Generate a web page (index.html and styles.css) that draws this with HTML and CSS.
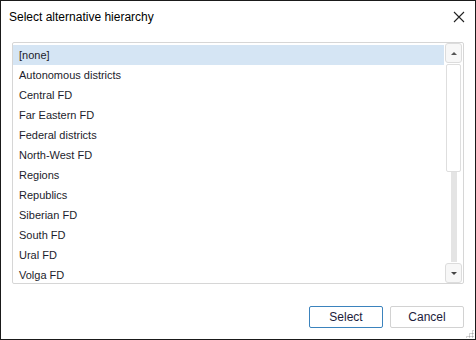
FILE: index.html
```html
<!DOCTYPE html>
<html lang="en">
<head>
    <meta charset="UTF-8">
    <title>Select alternative hierarchy</title>
    <link rel="stylesheet" href="styles.css">
</head>
<body>

    <div class="dialog">
        <div class="title-bar">
            <span class="title">Select alternative hierarchy</span>
            <svg class="close" width="12" height="12" viewBox="0 0 12 12">
                <path d="M1 1 L11 11 M11 1 L1 11" stroke="#222" stroke-width="1.1" fill="none"/>
            </svg>
        </div>

        <div class="list-box">
            <div class="items">
                <div class="item selected">[none]</div>
                <div class="item">Autonomous districts</div>
                <div class="item">Central FD</div>
                <div class="item">Far Eastern FD</div>
                <div class="item">Federal districts</div>
                <div class="item">North-West FD</div>
                <div class="item">Regions</div>
                <div class="item">Republics</div>
                <div class="item">Siberian FD</div>
                <div class="item">South FD</div>
                <div class="item">Ural FD</div>
                <div class="item">Volga FD</div>
            </div>
            <div class="scrollbar">
                <div class="scroll-btn"><span class="arrow up"></span></div>
                <div class="track">
                    <div class="thumb"></div>
                    <div class="rail"></div>
                </div>
                <div class="scroll-btn"><span class="arrow down"></span></div>
            </div>
        </div>

        <div class="buttons">
            <button class="btn primary">Select</button>
            <button class="btn">Cancel</button>
        </div>

        <div class="grip"></div>
    </div>

</body>
</html>
```

FILE: styles.css
```css
body {
    margin: 0;
    padding: 0;
    background: #ffffff;
    font-family: "Liberation Sans", Arial, sans-serif;
    color: #1c1c2c;
}

.dialog {
    width: 476px;
    height: 340px;
    box-sizing: border-box;
    border: 1px solid #1a1a1a;
    background: #ffffff;
    display: flex;
    flex-direction: column;
    position: relative;
}

.title-bar {
    height: 31px;
    display: flex;
    align-items: center;
    justify-content: space-between;
    padding: 0 8px 0 8px;
}

.title {
    font-size: 12px;
    color: #000;
}

.close {
    margin-right: 2px;
}

.list-box {
    margin: 10px 11px 0 11px;
    height: 242px;
    box-sizing: border-box;
    border: 1px solid #d6d6d6;
    border-radius: 2px;
    display: flex;
    overflow: hidden;
}

.items {
    flex: 1;
    padding-top: 2px;
}

.item {
    height: 20px;
    line-height: 20px;
    padding-left: 6px;
    font-size: 11px;
    white-space: nowrap;
}

.item.selected {
    background: #d5e5f4;
}

.scrollbar {
    width: 17px;
    padding: 0 1px;
    display: flex;
    flex-direction: column;
}

.scroll-btn {
    height: 20px;
    box-sizing: border-box;
    border: 1px solid #dcdcdc;
    border-radius: 3px;
    background: #f7f7f7;
    display: flex;
    align-items: center;
    justify-content: center;
}

.arrow {
    width: 0;
    height: 0;
    border-left: 3px solid transparent;
    border-right: 3px solid transparent;
}

.arrow.up {
    border-bottom: 3px solid #555;
}

.arrow.down {
    border-top: 3px solid #444;
}

.track {
    flex: 1;
    display: flex;
    flex-direction: column;
    align-items: center;
    padding: 1px 0;
}

.thumb {
    width: 15px;
    height: 108px;
    box-sizing: border-box;
    border: 1px solid #dedede;
    border-radius: 2px;
    background: #ffffff;
}

.rail {
    flex: 1;
    width: 6px;
    background: #e4e4e4;
}

.buttons {
    display: flex;
    justify-content: flex-end;
    gap: 7px;
    padding: 22px 11px 0 0;
}

.btn {
    width: 74px;
    height: 22px;
    box-sizing: border-box;
    border: 1px solid #d2d2d2;
    border-radius: 2px;
    background: #ffffff;
    font-family: "Liberation Sans", Arial, sans-serif;
    font-size: 12px;
    color: #1c1c3c;
    padding: 0;
}

.btn.primary {
    border-color: #3b83bd;
}

.grip {
    position: absolute;
    right: 1px;
    bottom: 1px;
    width: 9px;
    height: 9px;
    background-image: radial-gradient(circle, #b0b0b0 45%, transparent 50%);
    background-size: 3px 3px;
    clip-path: polygon(100% 0, 100% 100%, 0 100%);
}
```
